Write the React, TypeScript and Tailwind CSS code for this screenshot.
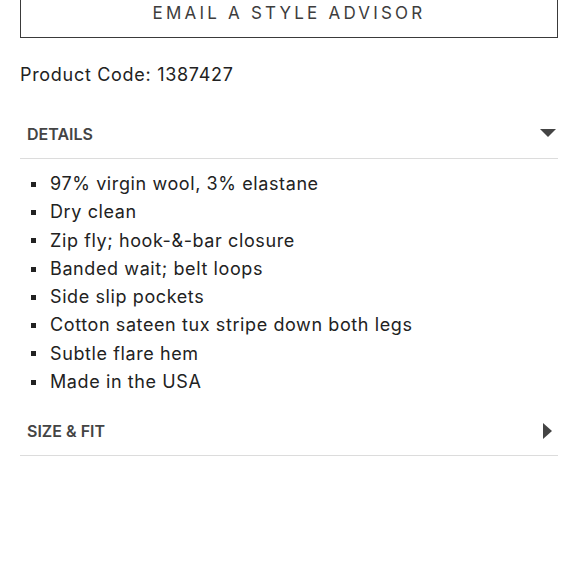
const details = [
  "97% virgin wool, 3% elastane",
  "Dry clean",
  "Zip fly; hook-&-bar closure",
  "Banded wait; belt loops",
  "Side slip pockets",
  "Cotton sateen tux stripe down both legs",
  "Subtle flare hem",
  "Made in the USA",
];

export default function App() {
  return (
    <div className="min-h-[580px] w-[580px] overflow-hidden bg-white pl-[20px] pr-[22px] font-['Inter',sans-serif] text-[#222]">
      <button className="-mt-[22px] flex h-[60px] w-full items-end justify-center border border-[#3a3a3a] pb-[11px] text-[17px] font-normal tracking-[3.2px] text-[#3d3d3d]">
        EMAIL A STYLE ADVISOR
      </button>

      <p className="mt-[25px] text-[18px] leading-[24px] tracking-[0.7px] text-[#222]">Product Code: 1387427</p>

      <section className="mt-[37px]">
        <div className="flex items-center justify-between border-b border-[#dcdcdc] pb-[14px] pl-[7px] pr-[2px]">
          <h3 className="text-[16px] font-semibold leading-[20px] text-[#444]">DETAILS</h3>
          <svg width="16" height="8" viewBox="0 0 16 8" className="mt-[-3px]">
            <path d="M0 0 H16 L8 8 Z" fill="#444" />
          </svg>
        </div>
        <ul className="mt-[11px] pl-[11px]">
          {details.map((item) => (
            <li key={item} className="flex items-center text-[18px] leading-[28.3px] tracking-[0.6px] text-[#222]">
              <span className="mr-[14px] inline-block h-[5px] w-[5px] bg-[#222]" />
              {item}
            </li>
          ))}
        </ul>
      </section>

      <section className="mt-[25px]">
        <div className="flex items-center justify-between border-b border-[#dcdcdc] pb-[14px] pl-[7px] pr-[6px]">
          <h3 className="text-[16px] font-semibold leading-[20px] text-[#444]">SIZE &amp; FIT</h3>
          <svg width="9" height="16" viewBox="0 0 9 16">
            <path d="M0 0 L9 8 L0 16 Z" fill="#444" />
          </svg>
        </div>
      </section>
    </div>
  );
}
